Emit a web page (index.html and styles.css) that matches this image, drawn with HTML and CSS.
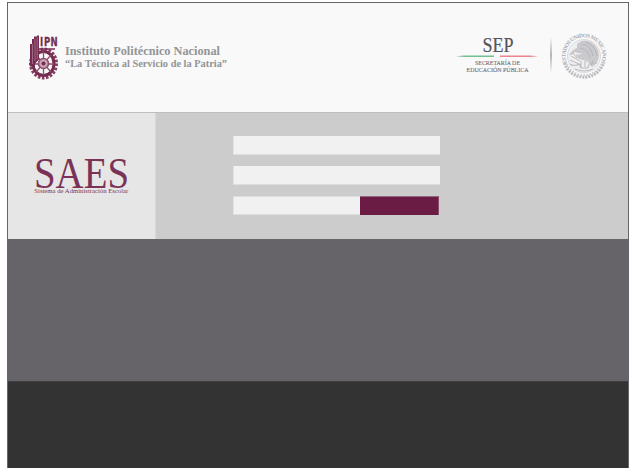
FILE: index.html
```html
<!DOCTYPE html>
<html lang="es">
<head>
<meta charset="utf-8">
<title>SAES</title>
<link rel="stylesheet" href="styles.css">
</head>
<body>
<div class="app">
  <header class="header">
    <div class="brand">
      <svg class="ipn" viewBox="0 0 32 48" width="32" height="48">
        <ellipse class="teeth" cx="15.500" cy="30.500" rx="13" ry="14.500"/>
        <ellipse class="rim" cx="15.500" cy="30.500" rx="10.500" ry="12"/>
        <path class="spokes" d="M15.500 18v24M5 31h21M8 22l15 17M8 39l15-17"/>
        <circle class="inner" cx="15.500" cy="30.500" r="5"/>
        <circle class="hub" cx="15.500" cy="30.500" r="2"/>
        <path class="tower" d="M2 11h2V6h2V3.500h3V2.500h2v24l-3 3-2 4H2z"/>
        <path class="cuts" d="M4.500 11v20M7 6v22M9.200 4v22"/>
        <text class="ipn-text" x="12 16 22.500" y="13.500">IPN</text>
        <path class="bar" d="M11 16h16"/>
      </svg>
      <svg class="name" viewBox="0 0 170 30" width="170" height="30">
        <text class="name-1" x="1" y="13" textLength="155" lengthAdjust="spacingAndGlyphs">Instituto Politécnico Nacional</text>
        <text class="name-2" x="1" y="25" textLength="162" lengthAdjust="spacingAndGlyphs">“La Técnica al Servicio de la Patria”</text>
      </svg>
    </div>
    <div class="gov">
      <svg class="sep" viewBox="0 0 84 40" width="84" height="40">
        <text class="sep-title" x="25.500" y="16.500" textLength="31" lengthAdjust="spacingAndGlyphs">SEP</text>
        <path class="green" d="M-1 21.300l8-.8h30v1.500H7z"/>
        <path class="red" d="M43 20.500h30l8 .8-8 .7H43z"/>
        <text class="sep-sub" x="18" y="29.500" textLength="45" lengthAdjust="spacingAndGlyphs">SECRETARÍA DE</text>
        <text class="sep-sub" x="9.500" y="37" textLength="62" lengthAdjust="spacingAndGlyphs">EDUCACIÓN PÚBLICA</text>
      </svg>
      <div class="divider"></div>
      <svg class="seal" viewBox="0 0 46 46" width="46" height="46">
        <path id="arc" class="arc" d="M6 30A18.500 18.500 0 1 1 40 30"/>
        <text class="seal-text"><textPath href="#arc" textLength="73" lengthAdjust="spacing">ESTADOS UNIDOS MEXICANOS</textPath></text>
        <circle class="disc" cx="23" cy="23" r="16.500"/>
        <path class="wreath" d="M3.500 30A20.500 20.500 0 0 0 42.500 30"/>
        <path class="wreath2" d="M6 31A18.500 18.500 0 0 0 40 31"/>
        <path class="wing" d="M16 11q6-6 14-2 8 5 8 14-1 8-7 11-3-6-9-7-7-1-7-6 3 2 6-1-3 1-7-1-4 4-6 3 4-6 8-7z"/>
        <path class="feather" d="M21 11q9 1 11 12M25 9q9 3 11 14M19 15q8 1 10 10M10 23l9 5M9 27l11 5M12 20l4 5M32 27l-2 6"/>
        <path class="ground" d="M9 31q5 3 9 0l2 4h7l1-4 8-1M14 36q9 4 18 0M20 28v6M24 28v6"/>
      </svg>
    </div>
  </header>
  <main class="login">
    <section class="logo">
      <svg viewBox="0 0 100 44" width="100" height="44">
        <text class="saes" x="1" y="33.500" textLength="95" lengthAdjust="spacingAndGlyphs">SAES</text>
        <text class="saes-sub" x="1.300" y="39" textLength="94" lengthAdjust="spacingAndGlyphs">Sistema de Administración Escolar</text>
      </svg>
    </section>
    <form class="form">
      <div class="field"></div>
      <div class="field"></div>
      <div class="row">
        <div class="field short"></div>
        <div class="submit"></div>
      </div>
    </form>
  </main>
  <section class="content"></section>
  <footer class="footer"></footer>
</div>
</body>
</html>
```
FILE: styles.css
```css
* { box-sizing: border-box; }
body { margin: 0; background: #fff; font-family: "Liberation Serif", serif; overflow: hidden; }
svg { display: block; font-family: "Liberation Serif", serif; overflow: visible; }
.app { width: 622px; height: 466px; margin: 2px 0 0 7px; border: 1px solid #67656a; border-bottom: 0; display: flex; flex-direction: column; }
.header { height: 110px; flex: none; background: #f9f9f9; border-bottom: 1px solid #bebebe; display: flex; justify-content: space-between; align-items: flex-start; padding: 30px 21px 0 20px; }
.brand { display: flex; gap: 4px; }
.name { margin-top: 9px; }
.ipn .teeth { fill: none; stroke: #843f61; stroke-width: 3; stroke-dasharray: 2.6 1.5; }
.ipn .rim { fill: none; stroke: #762b50; stroke-width: 3; }
.ipn .inner { fill: #c9a5b6; stroke: #8d4d6c; stroke-width: 1.6; }
.ipn .hub { fill: #762b50; }
.ipn .spokes { stroke: #8d4d6c; stroke-width: 1.3; }
.ipn .tower { fill: #762b50; }
.ipn .cuts { fill: none; stroke: #c8a8b7; stroke-width: .5; }
.ipn .bar { stroke: #762b50; stroke-width: 1.5; }
.ipn-text { font: bold 9.5px "DejaVu Sans Condensed", "Liberation Sans", sans-serif; fill: #762b50; stroke: #762b50; stroke-width: .2; transform: scaleY(1.35); transform-origin: 0 13.5px; }
.name-1 { font-size: 12px; font-weight: bold; fill: #929496; }
.name-2 { font-size: 10.5px; font-weight: bold; fill: #929496; }
.gov { display: flex; }
.sep { margin-top: 2px; }
.sep-title { font-size: 20px; fill: #55545f; stroke: #55545f; stroke-width: .2; }
.sep-sub { font-size: 6.2px; fill: #6d6c76; stroke: #6d6c76; stroke-width: .1; }
.green { fill: #76bf93; }
.red { fill: #e98490; }
.divider { width: 2px; height: 36px; margin: 4px 9px 0 9px; background: linear-gradient(#f9f9f9, #b4b4b4 50%, #f9f9f9); }
.arc { fill: none; }
.seal-text { font-size: 5.6px; font-weight: bold; fill: #aaabaf; }
.disc { fill: #efeff0; stroke: #d6d6d9; stroke-width: .8; }
.wreath { fill: none; stroke: #bcbcc1; stroke-width: 3; stroke-dasharray: 2 1; }
.wreath2 { fill: none; stroke: #cdcdd1; stroke-width: 2; stroke-dasharray: 1.5 1.5; }
.wing { fill: #cacace; }
.feather { fill: none; stroke: #b4b4b9; stroke-width: .9; }
.ground { fill: none; stroke: #bcbcc1; stroke-width: 1.1; }
.login { height: 126px; flex: none; display: flex; background: #ccc; }
.logo { width: 148px; background: #e6e6e6; border-right: 1px solid #d8d8d8; padding: 41px 0 0 25px; }
.saes { font-size: 44px; fill: #7a3356; }
.saes-sub { font-size: 6.8px; fill: #7a3356; }
.form { width: 207px; margin-left: 77px; padding-top: 23px; display: flex; flex-direction: column; gap: 11px; }
.field { height: 19px; background: #f1f1f1; border-left: 1px solid #e2e2e2; border-bottom: 1px solid #dedede; }
.row { display: flex; }
.short { width: 127px; border-top: 1px solid #dedede; }
.submit { width: 79px; height: 19px; background: #6a1c44; border-top: 1px solid #96667e; border-right: 1px solid #884f6b; }
.content { height: 142px; flex: none; background: #666369; }
.footer { flex: 1; background: #333; border-top: 1px solid #3f3e40; }
```
